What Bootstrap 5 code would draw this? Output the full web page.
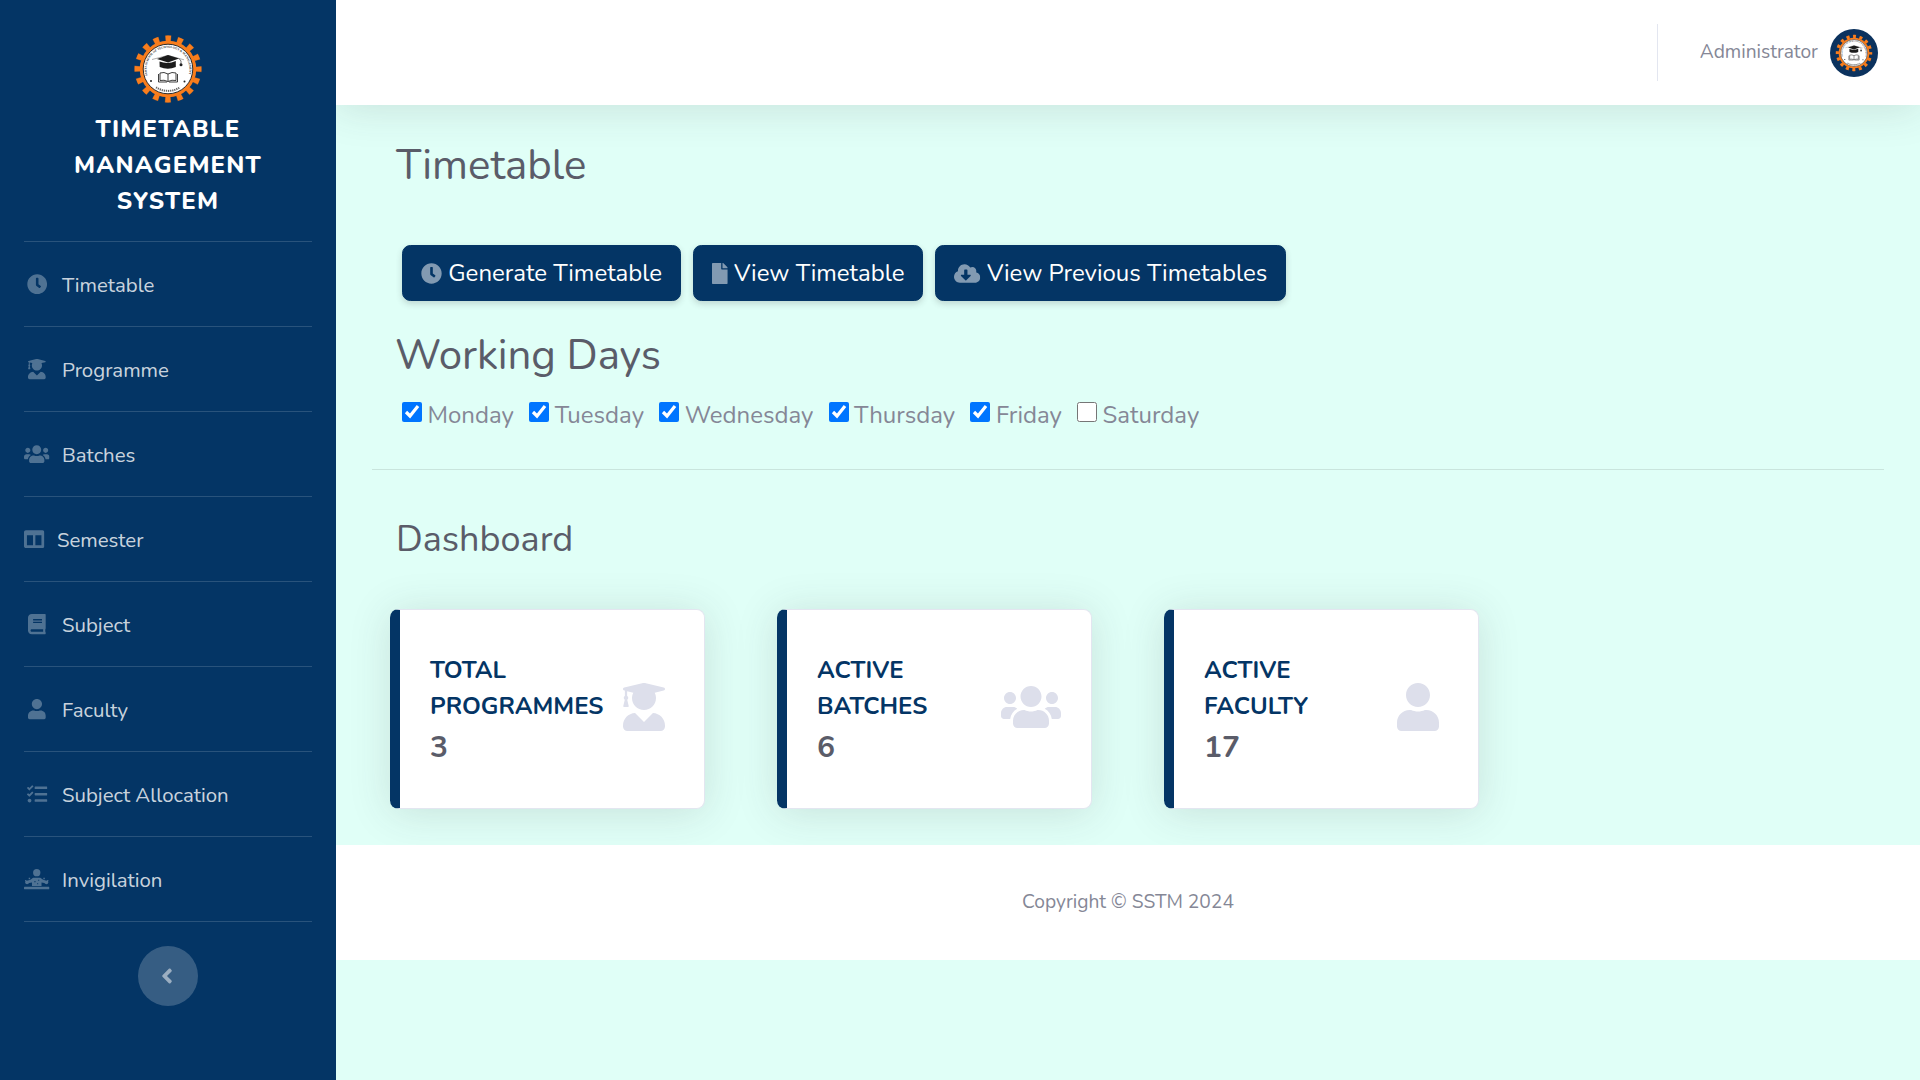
<!DOCTYPE html>
<html lang="en">
<head>
<meta charset="utf-8">
<meta name="viewport" content="width=device-width, initial-scale=1">
<title>Timetable Management System</title>
<link href="https://cdn.jsdelivr.net/npm/bootstrap@5.3.0/dist/css/bootstrap.min.css" rel="stylesheet">
<style>
html{font-size:24px}
body{font-family:"Nunito","Lato",sans-serif;color:#858796;background:#e0fff7;overflow:hidden}
.fa{height:1em;fill:currentColor;display:inline-block;vertical-align:-.125em;overflow:visible}
.sidebar{width:336px;background:#043565;padding-top:34px;z-index:3}
.brand{color:#fff;font-weight:800;letter-spacing:1.2px;line-height:36px;margin-bottom:22px}
.brand svg{width:70px;height:70px;margin-bottom:7px}
.side-item{margin:0 24px;padding-top:2px;height:85px;border-top:1px solid rgba(255,255,255,.15);font-size:20.4px;color:rgba(255,255,255,.8)}
.side-icon{width:25.5px;margin-right:12.5px;color:rgba(255,255,255,.3);font-size:20.4px;line-height:1;text-align:center}
.side-icon.narrow{width:20.4px}
.side-end{margin:0 24px;border-top:1px solid rgba(255,255,255,.15)}
.toggle-btn{width:60px;height:60px;background:rgba(255,255,255,.2);color:rgba(255,255,255,.5);margin:24px auto 0}
.toggle-btn .fa{width:12px;height:24px;margin-right:2px}
.topbar{height:105px;box-shadow:0 .15rem 1.75rem 0 rgba(58,59,69,.15);z-index:2}
.divider{width:1px;height:57px;background:#e3e6f0;margin-right:42px}
.avatar{width:48px;height:48px;background:#0b325e;margin:1px 42px 0 12px}
.user-name{font-size:19.2px}
.page{padding:36px 36px 0}
.heading{color:#5a5c69;font-weight:400;line-height:1.2;margin:0 0 0 24px}
.h-lg{font-size:42px}
.h-days{margin:30px 0 0 23px;letter-spacing:-.08px}
.h-md{font-size:36px;margin-top:48px}
.actions{margin:54px 0 0 30px;gap:12px}
.btn-navy{--bs-btn-color:#fff;--bs-btn-bg:#043565;--bs-btn-border-color:#043565;--bs-btn-hover-bg:#043565;--bs-btn-hover-color:#fff;border-radius:8.4px;box-shadow:0 .125rem .25rem rgba(58,59,69,.2);line-height:36px;height:56px;white-space:pre}
.btn-navy .fa{color:rgba(255,255,255,.5);font-size:21px}
.days{margin:15px 0 0 30px;gap:15.2px}
.days label{display:flex;align-items:center;line-height:36px}
.days input{width:20px;height:20px;margin:-5px 5.5px 0 0}
.rule{height:1px;background:rgba(0,0,0,.1);margin-top:35.8px}
.stats{margin:48px 0 36px 18px;gap:72px}
.stat{width:315px;height:200px;background:#fff;border:1px solid #e3e6f0;border-left:10px solid #043565;border-radius:8.4px;box-shadow:0 .15rem 1.75rem 0 rgba(58,59,69,.15);padding:0 30px}
.stat-label{color:#043565;font-weight:700;line-height:36px;margin-bottom:6px;width:150px}
.stat-num{color:#5a5c69;font-weight:700;font-size:30px;line-height:36px}
.stat-icon{width:60px;font-size:48px;color:#dddfeb;line-height:1;margin-top:-4px}
.stat-icon .fa{display:block;margin:auto}
.foot{height:115px;font-size:19.2px;line-height:1}
</style>
</head>
<body>
<svg width="0" height="0" class="position-absolute">
<defs>
<symbol id="clock" viewBox="0 0 512 512"><path d="M256,8C119,8,8,119,8,256S119,504,256,504,504,393,504,256,393,8,256,8Zm92.49,313h0l-20,25a16,16,0,0,1-22.49,2.5h0l-67-49.72a40,40,0,0,1-15-31.23V112a16,16,0,0,1,16-16h32a16,16,0,0,1,16,16V256l58,42.5A16,16,0,0,1,348.49,321Z"/></symbol>
<symbol id="user" viewBox="0 0 448 512"><path d="M224 256c70.7 0 128-57.3 128-128S294.7 0 224 0 96 57.3 96 128s57.3 128 128 128zm89.6 32h-16.7c-22.2 10.2-46.9 16-72.9 16s-50.6-5.8-72.9-16h-16.7C60.2 288 0 348.2 0 422.4V464c0 26.5 21.5 48 48 48h352c26.5 0 48-21.5 48-48v-41.6c0-74.2-60.2-134.4-134.4-134.4z"/></symbol>
<symbol id="grad" viewBox="0 0 448 512"><path d="M319.4 320.6L224 416l-95.4-95.4C57.1 323.7 0 382.2 0 454.4v9.6c0 26.5 21.5 48 48 48h352c26.5 0 48-21.5 48-48v-9.6c0-72.2-57.1-130.7-128.6-133.8zM13.6 79.8l6.4 1.5v58.4c-7 4.2-12 11.5-12 20.3 0 8.4 4.6 15.4 11.1 19.7L3.5 242c-1.7 6.9 2.1 14 7.6 14h41.8c5.5 0 9.3-7.1 7.6-14l-15.6-62.3C51.4 175.4 56 168.4 56 160c0-8.8-5-16.1-12-20.3V87.1l66 15.9c-8.6 17.2-14 36.4-14 57 0 70.7 57.3 128 128 128s128-57.3 128-128c0-20.6-5.3-39.8-14-57l96.3-23.2c18.2-4.4 18.2-27.1 0-31.5l-190.4-46c-13-3.1-26.7-3.1-39.7 0L13.6 48.2c-18.1 4.4-18.1 27.2 0 31.6z"/></symbol>
<symbol id="users" viewBox="0 0 640 512"><path d="M96 224c35.3 0 64-28.7 64-64s-28.7-64-64-64-64 28.7-64 64 28.7 64 64 64zm448 0c35.3 0 64-28.7 64-64s-28.7-64-64-64-64 28.7-64 64 28.7 64 64 64zm32 32h-64c-17.6 0-33.5 7.1-45.1 18.6 40.3 22.1 68.9 62 75.1 109.4h66c17.7 0 32-14.3 32-32v-32c0-35.3-28.7-64-64-64zm-256 0c61.9 0 112-50.1 112-112S381.9 32 320 32 208 82.1 208 144s50.1 112 112 112zm76.8 32h-8.3c-20.8 10-43.9 16-68.5 16s-47.6-6-68.5-16h-8.3C179.6 288 128 339.6 128 403.2V432c0 26.5 21.5 48 48 48h288c26.5 0 48-21.5 48-48v-28.8c0-63.6-51.6-115.2-115.2-115.2zm-223.7-13.4C161.5 263.1 145.6 256 128 256H64c-35.3 0-64 28.7-64 64v32c0 17.7 14.3 32 32 32h65.9c6.3-47.4 34.9-87.3 75.2-109.4z"/></symbol>
<symbol id="columns" viewBox="0 0 512 512"><path d="M464 32H48C21.49 32 0 53.49 0 80v352c0 26.51 21.49 48 48 48h416c26.51 0 48-21.49 48-48V80c0-26.51-21.49-48-48-48zM226 406H74V160h152v246zm212 0H286V160h152v246z"/></symbol>
<symbol id="book" viewBox="0 0 448 512"><path d="M448 360V24c0-13.3-10.7-24-24-24H96C43 0 0 43 0 96v320c0 53 43 96 96 96h328c13.3 0 24-10.7 24-24v-16c0-7.5-3.5-14.3-8.9-18.7-4.2-15.4-4.2-59.3 0-74.7 5.4-4.3 8.9-11.1 8.9-18.6zM128 134c0-3.3 2.7-6 6-6h212c3.3 0 6 2.7 6 6v20c0 3.3-2.7 6-6 6H134c-3.3 0-6-2.7-6-6v-20zm0 64c0-3.3 2.7-6 6-6h212c3.3 0 6 2.7 6 6v20c0 3.3-2.7 6-6 6H134c-3.3 0-6-2.7-6-6v-20zm253.4 250H96c-17.7 0-32-14.3-32-32 0-17.6 14.4-32 32-32h285.4c-1.9 17.1-1.9 46.9 0 64z"/></symbol>
<symbol id="tasks" viewBox="0 0 512 512"><path d="M139.61 35.5a12 12 0 0 0-17 0L58.93 98.81l-22.7-22.12a12 12 0 0 0-17 0L3.53 92.41a12 12 0 0 0 0 17l47.59 47.4a12.78 12.78 0 0 0 17.61 0l15.59-15.62L156.52 69a12.09 12.09 0 0 0 .09-17zm0 159.19a12 12 0 0 0-17 0l-63.68 63.72-22.7-22.1a12 12 0 0 0-17 0L3.53 252a12 12 0 0 0 0 17L51 316.5a12.77 12.77 0 0 0 17.6 0l15.7-15.69 72.2-72.22a12 12 0 0 0 .09-16.9zM64 368c-26.49 0-48.59 21.5-48.59 48S37.53 464 64 464a48 48 0 0 0 0-96zm432 16H208a16 16 0 0 0-16 16v32a16 16 0 0 0 16 16h288a16 16 0 0 0 16-16v-32a16 16 0 0 0-16-16zm0-320H208a16 16 0 0 0-16 16v32a16 16 0 0 0 16 16h288a16 16 0 0 0 16-16V80a16 16 0 0 0-16-16zm0 160H208a16 16 0 0 0-16 16v32a16 16 0 0 0 16 16h288a16 16 0 0 0 16-16v-32a16 16 0 0 0-16-16z"/></symbol>
<symbol id="desk" viewBox="0 0 640 512"><circle cx="320" cy="92" r="92"/><path d="M230 218h180l70 50 62 22c60-4 86 44 60 74-28 28-72 20-92-10l-70-14v88H200v-88l-70 14c-20 30-64 38-92 10-26-30 0-78 60-74l62-22z"/><path d="M118 220h36v36h-36zM486 220h36v36h-36zM28 276h30v30H28zM582 276h30v30h-30z"/><rect y="448" width="640" height="64" rx="14"/><path fill="#043565" d="M262 300h26v30h-26zM356 270h26v26h-26zM330 356h26v26h-26z"/></symbol>
<symbol id="file" viewBox="0 0 384 512"><path d="M224 136V0H24C10.7 0 0 10.7 0 24v464c0 13.3 10.7 24 24 24h336c13.3 0 24-10.7 24-24V160H248c-13.2 0-24-10.8-24-24zm160-14.1v6.1H256V0h6.1c6.4 0 12.5 2.5 17 7l97.9 98c4.5 4.5 7 10.6 7 16.9z"/></symbol>
<symbol id="cloud" viewBox="0 0 640 512"><path d="M537.6 226.6c4.1-10.7 6.4-22.4 6.4-34.6 0-53-43-96-96-96-19.7 0-38.1 6-53.3 16.2C367 64.2 315.3 32 256 32c-88.4 0-160 71.6-160 160 0 2.7.1 5.4.2 8.1C40.2 219.8 0 273.2 0 336c0 79.5 64.5 144 144 144h368c70.7 0 128-57.3 128-128 0-61.9-44-113.6-102.4-125.4zm-132.9 88.7L299.3 420.7c-6.2 6.2-16.4 6.2-22.6 0L171.3 315.3c-10.1-10.1-2.9-27.3 11.3-27.3H248V176c0-8.8 7.2-16 16-16h48c8.8 0 16 7.2 16 16v112h65.4c14.2 0 21.4 17.2 11.3 27.3z"/></symbol>
<symbol id="angle" viewBox="0 0 256 512"><path d="M31.7 239l136-136c9.4-9.4 24.6-9.4 33.9 0l22.6 22.6c9.4 9.4 9.4 24.6 0 33.9L127.9 256l96.4 96.4c9.4 9.4 9.4 24.6 0 33.9L201.7 409c-9.4 9.4-24.6 9.4-33.9 0l-136-136c-9.5-9.4-9.5-24.6-.1-34z"/></symbol>
<path id="arc" d="M-20.4 6.6A21.4 21.4 0 1 1 20.4 6.6"/>
<symbol id="logo" viewBox="-35 -35 70 70">
<circle r="30.6" fill="none" stroke="#6b5040" stroke-width="6.2" stroke-dasharray="6 6.017" stroke-dashoffset="3"/>
<circle r="30.6" fill="none" stroke="#f97d1c" stroke-width="5.6" stroke-dasharray="5.2 6.817" stroke-dashoffset="2.6"/>
<circle r="28.3" fill="#f97d1c"/><circle r="24.8" fill="#fff" stroke="#2b2b2b" stroke-width="1"/>
<text font-family="Liberation Serif,serif" font-size="3.1" font-weight="700" fill="#333"><textPath href="#arc" textLength="80">SURYA SCHOOL OF TECHNOLOGY &amp; MANAGEMENT</textPath></text>
<path d="M-12 18.3A21.9 21.9 0 0 0 12 18.3" fill="none" stroke="#666" stroke-width="2" stroke-dasharray="1.3 .8"/>
<circle cx="-17" cy="12" r="1" fill="#222"/><circle cx="16.500" cy="12.500" r="1" fill="#222"/>
<path d="M-16-9.500L0-13.600 16-9.200" fill="none" stroke="#777" stroke-width=".6"/>
<path d="M-11-10L0-14 11-10.500 0-6.500z" fill="#1b1b1b"/>
<path d="M-8.500-7.500Q0-4.500 7.800-8v6Q0 1.500-8.300-2z" fill="#1b1b1b"/>
<path d="M11-10.500L13-8v3" fill="none" stroke="#333" stroke-width=".7"/><circle cx="13" cy="-4.300" r="1.500" fill="#222"/>
<path d="M0 5Q-4 2.500-8 4v7.500Q-4 10.500 0 12.500 4 10.500 8 11.500V4Q4 2.500 0 5zV12.500M-9.500 5v8H-1M9.500 5v8H1" fill="#fff" stroke="#2b2b2b" stroke-width=".9"/>
</symbol>
</defs>
</svg>
<div class="d-flex vh-100">
<nav class="sidebar flex-shrink-0 position-relative">
<div class="brand text-center"><svg class="d-block mx-auto"><use href="#logo"/></svg><div>TIMETABLE</div><div>MANAGEMENT</div><div>SYSTEM</div></div>
<div class="side-item d-flex align-items-center"><span class="side-icon"><svg class="fa" viewBox="0 0 512 512"><use href="#clock"/></svg></span>Timetable</div>
<div class="side-item d-flex align-items-center"><span class="side-icon"><svg class="fa" viewBox="0 0 448 512"><use href="#grad"/></svg></span>Programme</div>
<div class="side-item d-flex align-items-center"><span class="side-icon"><svg class="fa" viewBox="0 0 640 512"><use href="#users"/></svg></span>Batches</div>
<div class="side-item d-flex align-items-center"><span class="side-icon narrow"><svg class="fa" viewBox="0 0 512 512"><use href="#columns"/></svg></span>Semester</div>
<div class="side-item d-flex align-items-center"><span class="side-icon"><svg class="fa" viewBox="0 0 448 512"><use href="#book"/></svg></span>Subject</div>
<div class="side-item d-flex align-items-center"><span class="side-icon"><svg class="fa" viewBox="0 0 448 512"><use href="#user"/></svg></span>Faculty</div>
<div class="side-item d-flex align-items-center"><span class="side-icon"><svg class="fa" viewBox="0 0 512 512"><use href="#tasks"/></svg></span>Subject Allocation</div>
<div class="side-item d-flex align-items-center"><span class="side-icon"><svg class="fa" viewBox="0 0 640 512"><use href="#desk"/></svg></span>Invigilation</div>
<div class="side-end"><div class="toggle-btn rounded-circle d-flex align-items-center justify-content-center"><svg class="fa" viewBox="0 0 256 512"><use href="#angle"/></svg></div></div>
</nav>
<div class="flex-grow-1 d-flex flex-column">
<header class="topbar bg-white d-flex align-items-center justify-content-end position-relative">
<div class="divider"></div><span class="user-name">Administrator</span>
<div class="avatar rounded-circle d-flex align-items-center justify-content-center"><svg width="38" height="38"><use href="#logo"/></svg></div>
</header>
<main class="page">
<h1 class="heading h-lg">Timetable</h1>
<div class="d-flex actions">
<button class="btn btn-navy"><svg class="fa" viewBox="0 0 512 512"><use href="#clock"/></svg> Generate Timetable</button>
<button class="btn btn-navy"><svg class="fa" viewBox="0 0 384 512"><use href="#file"/></svg> View Timetable</button>
<button class="btn btn-navy"><svg class="fa" viewBox="0 0 640 512"><use href="#cloud"/></svg> View Previous Timetables</button>
</div>
<h1 class="heading h-lg h-days">Working Days</h1>
<div class="days d-flex">
<label><input type="checkbox" checked>Monday</label>
<label><input type="checkbox" checked>Tuesday</label>
<label><input type="checkbox" checked>Wednesday</label>
<label><input type="checkbox" checked>Thursday</label>
<label><input type="checkbox" checked>Friday</label>
<label><input type="checkbox">Saturday</label>
</div>
<div class="rule"></div>
<h2 class="heading h-md">Dashboard</h2>
<div class="d-flex stats">
<div class="stat d-flex align-items-center justify-content-between"><div><div class="stat-label">TOTAL PROGRAMMES</div><div class="stat-num">3</div></div><div class="stat-icon"><svg class="fa" viewBox="0 0 448 512"><use href="#grad"/></svg></div></div>
<div class="stat d-flex align-items-center justify-content-between"><div><div class="stat-label">ACTIVE BATCHES</div><div class="stat-num">6</div></div><div class="stat-icon"><svg class="fa" viewBox="0 0 640 512"><use href="#users"/></svg></div></div>
<div class="stat d-flex align-items-center justify-content-between"><div><div class="stat-label">ACTIVE FACULTY</div><div class="stat-num">17</div></div><div class="stat-icon"><svg class="fa" viewBox="0 0 448 512"><use href="#user"/></svg></div></div>
</div>
</main>
<footer class="foot bg-white d-flex align-items-center justify-content-center">Copyright © SSTM 2024</footer>
</div>
</div>
<script src="https://cdn.jsdelivr.net/npm/bootstrap@5.3.0/dist/js/bootstrap.bundle.min.js"></script>
</body>
</html>
